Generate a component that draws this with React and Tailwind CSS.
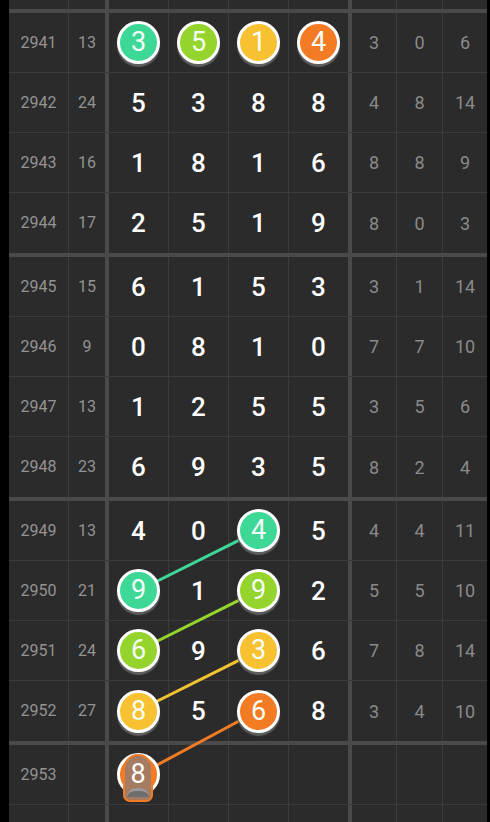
import React from 'react';

const BALL = {
    green: 'bg-[#3dd796]',
    lime: 'bg-[#95d42c]',
    yellow: 'bg-[#f7c131]',
    orange: 'bg-[#f27b24]',
};

const groups = [
    [
        {n: 2941, s: 13, d: [3, 5, 1, 4], b: ['green', 'lime', 'yellow', 'orange'], r: [3, 0, 6]},
        {n: 2942, s: 24, d: [5, 3, 8, 8], b: [], r: [4, 8, 14]},
        {n: 2943, s: 16, d: [1, 8, 1, 6], b: [], r: [8, 8, 9]},
        {n: 2944, s: 17, d: [2, 5, 1, 9], b: [], r: [8, 0, 3]},
    ],
    [
        {n: 2945, s: 15, d: [6, 1, 5, 3], b: [], r: [3, 1, 14]},
        {n: 2946, s: 9, d: [0, 8, 1, 0], b: [], r: [7, 7, 10]},
        {n: 2947, s: 13, d: [1, 2, 5, 5], b: [], r: [3, 5, 6]},
        {n: 2948, s: 23, d: [6, 9, 3, 5], b: [], r: [8, 2, 4]},
    ],
    [
        {n: 2949, s: 13, d: [4, 0, 4, 5], b: [null, null, 'green'], r: [4, 4, 11]},
        {n: 2950, s: 21, d: [9, 1, 9, 2], b: ['green', null, 'lime'], r: [5, 5, 10]},
        {n: 2951, s: 24, d: [6, 9, 3, 6], b: ['lime', null, 'yellow'], r: [7, 8, 14]},
        {n: 2952, s: 27, d: [8, 5, 6, 8], b: ['yellow', null, 'orange'], r: [3, 4, 10]},
    ],
];

const ballW = ['w-[60px] border-r', 'w-[60px] border-r', 'w-[60px] border-r', 'w-[59px]'];
const rightW = ['w-[45px] border-r', 'w-[46px] border-r', 'w-[44px]'];

const Ball = ({value, color}) => (
    <div
        className={`relative z-10 w-[43px] h-[43px] rounded-full border-[3px] border-white ${BALL[color]} shadow-[0_3px_1px_#5e5e5e] flex items-center justify-center text-[27px] leading-none text-[#f4fff6]`}>
        {value}
    </div>
);

const Row = ({row, last, children, h = 'h-[60px]'}) => (
    <div className={`flex ${h} ${last ? '' : 'border-b border-[#3c3c3c]'}`}>
        <div className="w-[60px] border-r border-[#3c3c3c] flex items-center justify-center text-[16px] text-[#939393]">
            {row ? row.n : ''}
        </div>
        <div className="w-[36px] flex items-center justify-center text-[16px] text-[#939393]">
            {row && row.s !== undefined ? row.s : ''}
        </div>
        <div className="w-[4px] bg-[#4a4a4a]"/>
        {children ? children : ballW.map((w, i) => (
            <div key={i} className={`${w} border-[#3c3c3c]`}/>
        ))}
        <div className="w-[4px] bg-[#4a4a4a]"/>
        {rightW.map((w, i) => (
            <div key={i}
                 className={`${w} border-[#3c3c3c] flex items-center justify-center text-[18px] text-[#8a8a8a]`}>
                {row && row.r ? row.r[i] : ''}
            </div>
        ))}
    </div>
);

const DigitCells = ({row}) => row.d.map((v, i) => (
    <div key={i} className={`${ballW[i]} border-[#3c3c3c] flex items-center justify-center`}>
        {row.b[i] ? (
            <Ball value={v} color={row.b[i]}/>
        ) : (
            <span className="text-[26px] font-medium leading-none text-white">{v}</span>
        )}
    </div>
));

const links = [
    {x1: 249.5, y1: 530.5, x2: 129.5, y2: 590.5, c: '#3dd796'},
    {x1: 249.5, y1: 590.5, x2: 129.5, y2: 650.5, c: '#95d42c'},
    {x1: 249.5, y1: 650.5, x2: 129.5, y2: 710.5, c: '#f2c232'},
    {x1: 249.5, y1: 710.5, x2: 129.5, y2: 775, c: '#f07c26'},
];

const App = () => {
    return (
        <div className="w-[490px] h-[822px] overflow-hidden bg-black flex" style={{fontFamily: 'Roboto, "Noto Sans", sans-serif'}}>
            <div className="relative ml-[9px] w-[478px] bg-[#2b2b2b]">
                <svg className="absolute inset-0" width="478" height="822">
                    {links.map((l, i) => (
                        <line key={i} x1={l.x1} y1={l.y1} x2={l.x2} y2={l.y2} stroke={l.c} strokeWidth="3"/>
                    ))}
                </svg>

                <Row last h="h-[9px]"/>
                {groups.map((g, gi) => (
                    <React.Fragment key={gi}>
                        <div className="h-[4px] bg-[#4a4a4a]"/>
                        {g.map((row, ri) => (
                            <Row key={row.n} row={row} last={ri === g.length - 1}>
                                <DigitCells row={row}/>
                            </Row>
                        ))}
                    </React.Fragment>
                ))}
                <div className="h-[4px] bg-[#4a4a4a]"/>

                <Row row={{n: 2953}}>
                    <div className="w-[60px] border-r border-[#3c3c3c] flex items-center justify-center">
                        <div className="relative z-10 w-[43px] h-[43px]">
                            <div className="absolute inset-0 rounded-full border-[3px] border-white bg-[#f27b24]"/>
                            <div
                                className="absolute left-[6px] top-[1px] w-[30px] h-[48px] rounded-t-[15px] rounded-b-[7px] border-2 border-[#f07c26] bg-[#a57b62] overflow-hidden flex justify-center">
                                <span className="mt-[5px] text-[27px] leading-none text-white">8</span>
                                <div className="absolute left-[2px] right-[2px] bottom-[3px] h-[9px] rounded-t-[10px] border-t-[3px] border-[#9a9a9a] bg-[#6e6e6e]"/>
                            </div>
                        </div>
                    </div>
                    <div className="w-[60px] border-r border-[#3c3c3c]"/>
                    <div className="w-[60px] border-r border-[#3c3c3c]"/>
                    <div className="w-[59px]"/>
                </Row>
                <Row h="h-[30px]"/>
            </div>
        </div>
    );
};

export default App;
